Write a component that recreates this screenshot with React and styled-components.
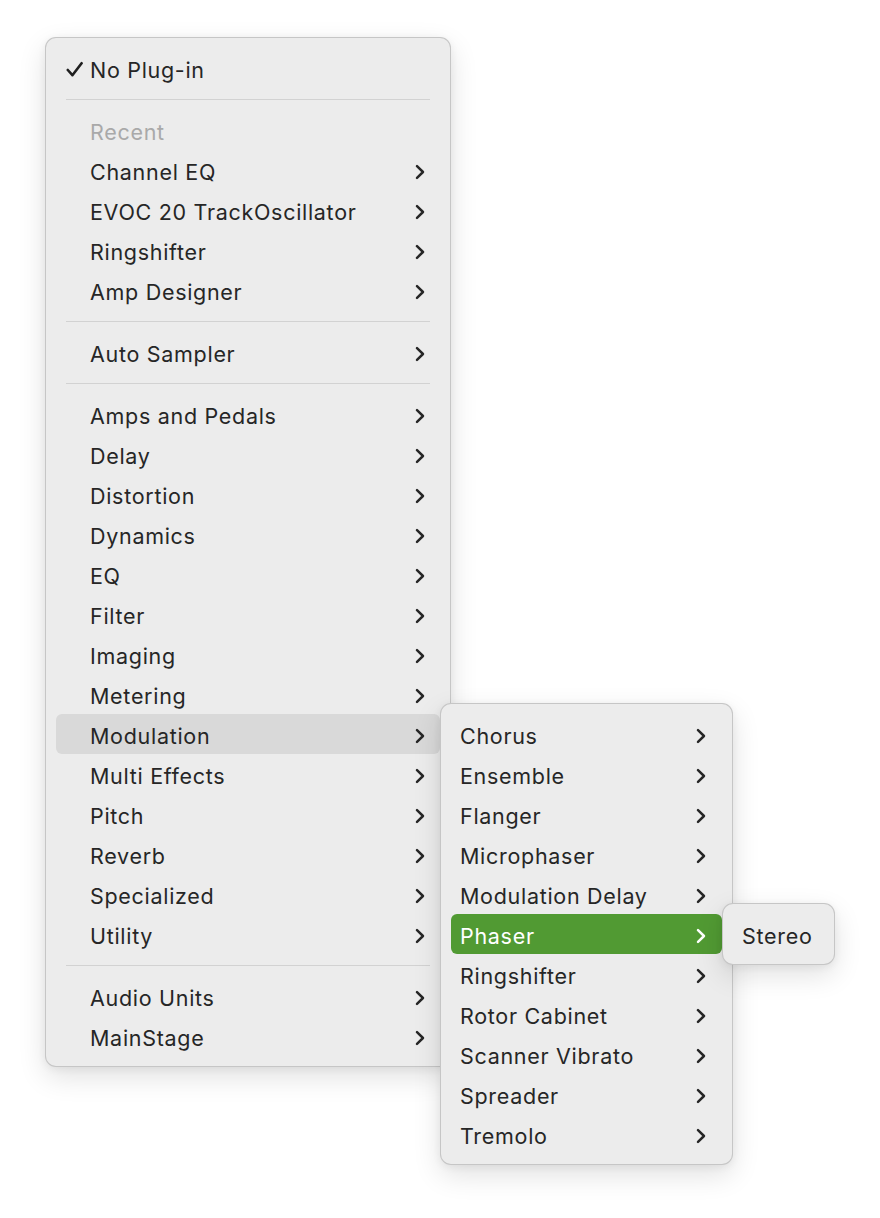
import React from "react";
import styled, { createGlobalStyle, css } from "styled-components";

const Global = createGlobalStyle`
  html, body { margin: 0; padding: 0; background: #ffffff; }
  body { font-family: Inter, "Noto Sans", "Liberation Sans", sans-serif; -webkit-font-smoothing: antialiased; }
`;

const Page = styled.div`
  width: 880px;
  height: 1218px;
  padding: 37px 0 0 45px;
  box-sizing: border-box;
  position: relative;
`;

const Menu = styled.div`
  box-sizing: border-box;
  width: ${(p) => p.$w}px;
  padding: 10px;
  background: #ececec;
  border: 1px solid rgba(0, 0, 0, 0.16);
  border-radius: 11px;
  box-shadow: 0 10px 28px rgba(0, 0, 0, 0.12), 0 2px 8px rgba(0, 0, 0, 0.06);
  display: flex;
  flex-direction: column;
`;

const SubMenu = styled(Menu)`
  position: absolute;
  left: 100%;
  top: -11px;
  z-index: 2;
`;

const Row = styled.div`
  position: relative;
  height: 40px;
  display: flex;
  align-items: center;
  border-radius: 6px;
  padding-left: ${(p) => (p.$check ? 0 : 9)}px;
  padding-right: ${(p) => p.$pr ?? 15}px;
  font-size: 21.5px;
  letter-spacing: 0.7px;
  color: #262626;
  ${(p) =>
    p.$state === "hover" &&
    css`
      background: #d9d9d9;
    `}
  ${(p) =>
    p.$state === "active" &&
    css`
      background: #519a33;
      color: #ffffff;
    `}
  ${(p) =>
    p.$muted &&
    css`
      color: #a9a9a9;
    `}
`;

const CheckSlot = styled.span`
  width: 34px;
  flex: none;
  display: flex;
  align-items: center;
  padding-left: 10px;
  padding-top: 2px;
  box-sizing: border-box;
`;

const Label = styled.span`
  flex: 1;
  white-space: nowrap;
  padding-top: 3px;
`;

const ChevronBox = styled.span`
  flex: none;
  display: flex;
  padding-top: 3px;
`;

const Separator = styled.div`
  height: 22px;
  display: flex;
  align-items: center;
  padding: 0 10px;
  &::after {
    content: "";
    flex: 1;
    height: 1px;
    background: #d2d2d2;
  }
`;

const Chevron = ({ color = "#262626" }) => (
  <ChevronBox>
    <svg width="10" height="16" viewBox="0 0 10 16">
      <path d="M2 2.2 L8 8 L2 13.8" fill="none" stroke={color} strokeWidth="2.5" strokeLinecap="round" strokeLinejoin="round" />
    </svg>
  </ChevronBox>
);

const Check = () => (
  <svg width="18" height="17" viewBox="0 0 18 17">
    <path d="M1.8 9 L6.4 14.2 L15.6 2.2" fill="none" stroke="#1f1f1f" strokeWidth="2.6" strokeLinecap="round" strokeLinejoin="round" />
  </svg>
);

const recent = ["Channel EQ", "EVOC 20 TrackOscillator", "Ringshifter", "Amp Designer"];
const categories = [
  "Amps and Pedals",
  "Delay",
  "Distortion",
  "Dynamics",
  "EQ",
  "Filter",
  "Imaging",
  "Metering",
  "Modulation",
  "Multi Effects",
  "Pitch",
  "Reverb",
  "Specialized",
  "Utility",
];
const modulation = [
  "Chorus",
  "Ensemble",
  "Flanger",
  "Microphaser",
  "Modulation Delay",
  "Phaser",
  "Ringshifter",
  "Rotor Cabinet",
  "Scanner Vibrato",
  "Spreader",
  "Tremolo",
];

const MainItem = ({ label, state, children }) => (
  <Row $check $state={state}>
    <CheckSlot />
    <Label>{label}</Label>
    <Chevron />
    {children}
  </Row>
);

export default function App() {
  return (
    <>
      <Global />
      <Page>
        <Menu $w={406}>
          <Row $check>
            <CheckSlot>
              <Check />
            </CheckSlot>
            <Label>No Plug-in</Label>
          </Row>
          <Separator />
          <Row $check $muted>
            <CheckSlot />
            <Label>Recent</Label>
          </Row>
          {recent.map((r) => (
            <MainItem key={r} label={r} />
          ))}
          <Separator />
          <MainItem label="Auto Sampler" />
          <Separator />
          {categories.map((c) =>
            c === "Modulation" ? (
              <MainItem key={c} label={c} state="hover">
                <SubMenu $w={293}>
                  {modulation.map((m) =>
                    m === "Phaser" ? (
                      <Row key={m} $state="active" $pr={16}>
                        <Label>{m}</Label>
                        <Chevron color="#ffffff" />
                        <SubMenu $w={113}>
                          <Row>
                            <Label>Stereo</Label>
                          </Row>
                        </SubMenu>
                      </Row>
                    ) : (
                      <Row key={m} $pr={16}>
                        <Label>{m}</Label>
                        <Chevron />
                      </Row>
                    )
                  )}
                </SubMenu>
              </MainItem>
            ) : (
              <MainItem key={c} label={c} />
            )
          )}
          <Separator />
          <MainItem label="Audio Units" />
          <MainItem label="MainStage" />
        </Menu>
      </Page>
    </>
  );
}
